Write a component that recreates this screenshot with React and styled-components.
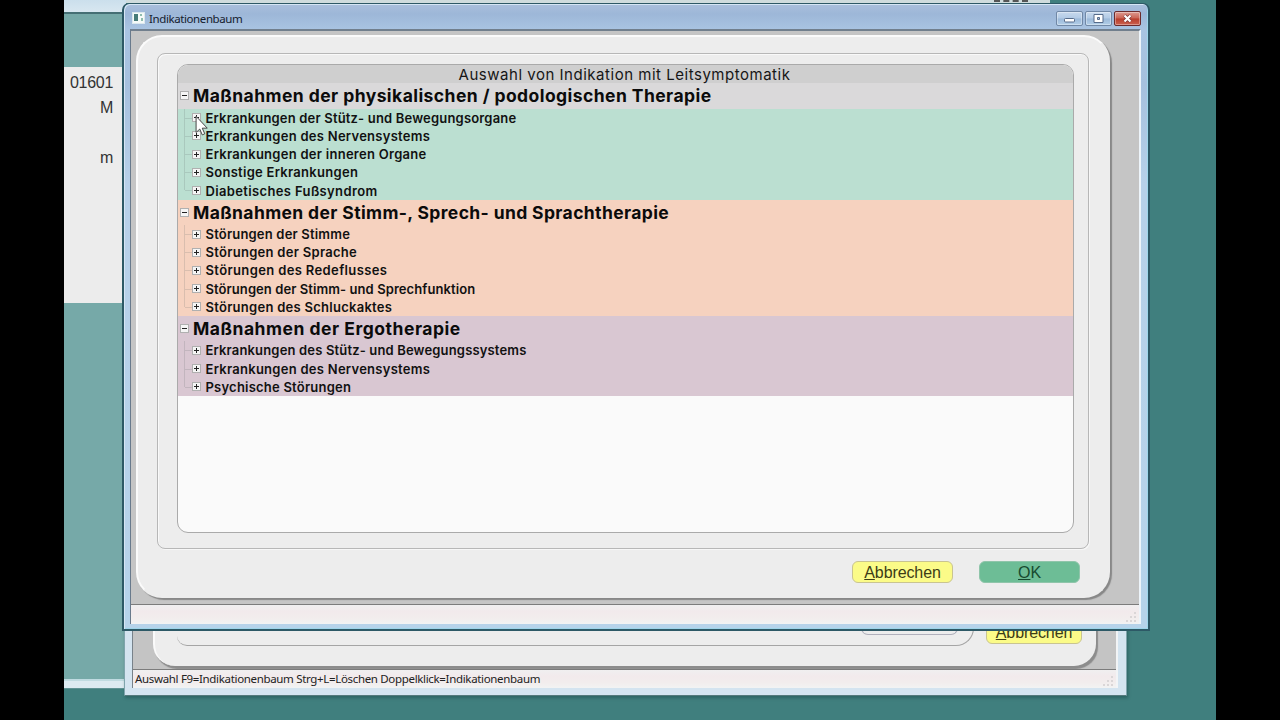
import React from 'react';
import styled, { createGlobalStyle } from 'styled-components';

const GlobalStyle = createGlobalStyle`
  body {
    margin: 0;
    background: #000;
    overflow: hidden;
  }
  * {
    box-sizing: border-box;
  }
`;

const Desktop = styled.div`
  position: relative;
  width: 1152px;
  height: 720px;
  margin: 0 auto;
  overflow: hidden;
  background: #407f7e;
`;

/* main application, mostly hidden behind the dialogs */
const AppWindow = styled.div`
  position: absolute;
  left: 0;
  top: 0;
  width: 62px;
  height: 689px;
  display: flex;
  flex-direction: column;
  background: #76a9a8;
  border-bottom: 1px solid #5f9294;
`;

const AppTitle = styled.div`
  height: 14px;
  background: linear-gradient(#cbdfec, #d8e7f0);
  border-bottom: 2px solid #456f74;
`;

const AppForm = styled.div`
  height: 236px;
  margin-top: 53px;
  padding: 3px 13px 0 0;
  background: #ececec;
  font: 16px/25px 'Liberation Sans', sans-serif;
  letter-spacing: -0.3px;
  color: #333;
  text-align: right;
`;

const Field = styled.div`
  height: 25px;
`;

const AppFooter = styled.div`
  height: 9px;
  margin-top: auto;
  background: #dceaf1;
  border-top: 2px solid #c0dbe1;
`;

const TopWindow = styled.div`
  position: absolute;
  left: 62px;
  top: 0;
  width: 924px;
  height: 3px;
  padding-left: 868px;
  background: #cfdcdd;
`;

const TopMark = styled.div`
  width: 34px;
  height: 2px;
  border-bottom: 2px dashed #555;
`;

const BackWindow = styled.div`
  position: absolute;
  left: 60px;
  top: 560px;
  width: 1003px;
  height: 136px;
  padding: 0 8px 8px 7px;
  background: #d4e4f0;
  border: 1px solid #7fa4ac;
  border-bottom-color: #55797c;
  box-shadow: 1px 2px 3px rgba(10, 50, 50, 0.35);
`;

const BackClient = styled.div`
  display: flex;
  flex-direction: column;
  height: 127px;
  background: #c4c4c4;
  border-left: 1px solid #78828a;
  border-right: 2px solid #f2f4f6;
`;

const BackPanel = styled.div`
  display: flex;
  height: 105px;
  margin: 0 20px 3px 20px;
  padding: 60px 13px 0 22px;
  background: #ededed;
  border-left: 2px solid #fafafa;
  border-radius: 0 0 22px 22px;
  box-shadow: 2px 3px 1px #8c8c8c;
`;

const BackGroup = styled.div`
  width: 797px;
  height: 25px;
  flex: none;
  padding-left: 684px;
  border: 1px solid #a5a5a5;
  border-top: 0;
  border-left: 0;
  border-radius: 0 0 18px 10px;
`;

const BackField = styled.div`
  width: 97px;
  height: 14px;
  border: 1px solid #b0b0bc;
  border-top: 0;
  border-radius: 0 0 7px 7px;
`;

const StatusBar = styled.div`
  display: flex;
  flex: 1;
  align-items: flex-end;
  justify-content: space-between;
  padding: 0 2px 2px 2px;
  background: linear-gradient(#f0eff0, #f2eaec 35%, #f2eded 70%, #f2f3f3);
  border-top: 1px solid #7c7c7c;
  font: 11.5px/15px 'Noto Sans', sans-serif;
  color: #222;
`;

const StatusText = styled.span`
  letter-spacing: -0.33px;
  white-space: nowrap;
`;

const Dialog = styled.div`
  position: absolute;
  left: 58px;
  top: 3px;
  width: 1028px;
  height: 628px;
  display: flex;
  flex-direction: column;
  padding: 0 7px 5px 6px;
  background: linear-gradient(#a9bfdc, #9db7d8 10px, #a9c4e2 26px, #a6c0de 80px, #b7d0e9 180px, #b6d3ea);
  border: 2px solid #2d5966;
  border-top-width: 1px;
  border-radius: 7px 7px 0 0;
  box-shadow: inset 1px 1px 0 #d5e6f5, inset -1px -1px 0 #9ed5ea;
`;

const TitleBar = styled.div`
  display: flex;
  height: 25px;
  align-items: center;
  padding: 3px 0 0 2px;
`;

const Title = styled.div`
  flex: 1;
  padding-left: 4px;
  font: 11.5px/15px 'Noto Sans', sans-serif;
  letter-spacing: -0.4px;
  color: #15202e;
`;

const WindowButtons = styled.div`
  display: flex;
  gap: 2px;
`;

const WindowButton = styled.div`
  display: flex;
  align-items: center;
  justify-content: center;
  width: 27px;
  height: 15px;
  background: ${p => p.$close
    ? 'linear-gradient(#dc9a90, #cb6353 48%, #b83d2b 52%, #cb6250)'
    : 'linear-gradient(#c7d9ed, #b2cae5 48%, #9bb9d9 52%, #b2cee7)'};
  border: 1px solid ${p => (p.$close ? '#6c2b2c' : '#7088a6')};
  border-radius: 2px;
  box-shadow: inset 0 0 0 1px rgba(255, 255, 255, 0.35);
`;

const Client = styled.div`
  display: flex;
  flex: 1;
  flex-direction: column;
  background: #c5c5c5;
  border-top: 2px solid #717f8d;
  border-left: 1px solid #697a8c;
  border-right: 2px solid #edf4fa;
`;

const Panel = styled.div`
  width: 974px;
  height: 563px;
  flex: none;
  margin: 4px 0 6px 5px;
  padding: 16px 19px 0;
  background: #ededed;
  border: 2px solid;
  border-color: #fbfbfb #ededed #ededed #fbfbfb;
  border-radius: 26px;
  box-shadow: 2px 2px 1px #888;
`;

const GroupBox = styled.div`
  height: 496px;
  width: 932px;
  padding: 10px 14px 0 19px;
  border: 1px solid #b7b7b7;
  border-radius: 8px;
  box-shadow: inset 1px 1px 0 #f9f9f9, 1px 1px 0 #f7f7f7;
`;

const List = styled.div`
  height: 469px;
  width: 897px;
  overflow: hidden;
  background: #fafafa;
  border: 1px solid #aaa;
  border-radius: 11px;
`;

const ListHeader = styled.div`
  height: 18.3px;
  background: #cfcfcf;
  font: 400 15px/20px Inter, sans-serif;
  letter-spacing: 0.52px;
  color: #161616;
  text-align: center;
  padding-right: 2px;
`;

const Group = styled.div`
  background: ${p => p.$color};
`;

const GroupTitle = styled.div`
  display: flex;
  align-items: center;
  height: 25.4px;
  padding-left: 2px;
  background: ${p => p.$color};
  font: 700 17.5px/25px Inter, sans-serif;
  letter-spacing: ${p => p.$spacing}px;
  color: #0b0b0b;
  white-space: nowrap;
`;

const Children = styled.div`
  margin-left: 6px;
`;

const Item = styled.div`
  display: flex;
  align-items: center;
  height: 18.2px;
  font: 600 13px/18px Inter, sans-serif;
  letter-spacing: ${p => p.$spacing}px;
  color: #111;
  white-space: nowrap;
`;

const Branch = styled.div`
  width: 8px;
  height: 18.2px;
  background:
    linear-gradient(rgba(90, 100, 100, 0.18), rgba(90, 100, 100, 0.18)) 0 0 / 1px ${p => (p.$last ? '9px' : '100%')} no-repeat,
    linear-gradient(rgba(90, 100, 100, 0.18), rgba(90, 100, 100, 0.18)) 1px 9px / 7px 1px no-repeat;
`;

const ToggleIcon = styled.svg`
  display: block;
  flex: none;
  width: 9px;
  height: 9px;
  margin-right: ${p => p.$gap}px;
`;

const Buttons = styled.div`
  display: flex;
  justify-content: flex-end;
  gap: 26px;
  padding: 12px 9px 0 0;
`;

const Button = styled.div`
  flex: none;
  width: 101px;
  height: 22px;
  background: ${p => (p.$primary ? '#6dbd96' : '#fbfb88')};
  border: 1px solid ${p => (p.$primary ? '#8fc5aa' : '#c9c491')};
  border-radius: 6px;
  font: 16px/21px 'Liberation Sans', sans-serif;
  letter-spacing: -0.1px;
  color: ${p => (p.$primary ? '#174a30' : '#3c3c16')};
  text-align: center;
`;

const BackButton = styled(Button)`
  width: 96px;
  height: 23px;
  margin: 0 0 0 12px;
`;

const Pointer = styled.svg`
  position: absolute;
  left: 131px;
  top: 115px;
`;

const groups = [
  {
    title: 'Maßnahmen der physikalischen / podologischen Therapie',
    spacing: 0.435,
    color: '#bbdfd1',
    titleColor: '#dad9da',
    items: [
      { label: 'Erkrankungen der Stütz- und Bewegungsorgane', spacing: 0.18 },
      { label: 'Erkrankungen des Nervensystems', spacing: 0.27 },
      { label: 'Erkrankungen der inneren Organe', spacing: 0.27 },
      { label: 'Sonstige Erkrankungen', spacing: 0.28 },
      { label: 'Diabetisches Fußsyndrom', spacing: 0.36 },
    ],
  },
  {
    title: 'Maßnahmen der Stimm-, Sprech- und Sprachtherapie',
    spacing: 0.375,
    color: '#f6d2bf',
    items: [
      { label: 'Störungen der Stimme', spacing: 0.19 },
      { label: 'Störungen der Sprache', spacing: 0.29 },
      { label: 'Störungen des Redeflusses', spacing: 0.37 },
      { label: 'Störungen der Stimm- und Sprechfunktion', spacing: 0.08 },
      { label: 'Störungen des Schluckaktes', spacing: 0.27 },
    ],
  },
  {
    title: 'Maßnahmen der Ergotherapie',
    spacing: 0.52,
    color: '#d9c7d2',
    items: [
      { label: 'Erkrankungen des Stütz- und Bewegungssystems', spacing: 0.16 },
      { label: 'Erkrankungen des Nervensystems', spacing: 0.27 },
      { label: 'Psychische Störungen', spacing: 0.22 },
    ],
  },
];

const Toggle = ({ open, gap }) => (
  <ToggleIcon viewBox="0 0 9 9" $gap={gap}>
    <rect x="0.5" y="0.5" width="8" height="8" fill="#f5f5f5" stroke="#b0b0b0" />
    <path d={open ? 'M2 4.5h5' : 'M2 4.5h5M4.5 2v5'} stroke="#222" />
  </ToggleIcon>
);

const Grip = () => (
  <svg width="11" height="11" viewBox="0 0 11 11">
    <path
      d="M8 1h2v2H8zM8 5h2v2H8zM8 9h2v2H8zM4 5h2v2H4zM4 9h2v2H4zM0 9h2v2H0z"
      fill="#dad6d7"
    />
  </svg>
);

export default function App() {
  return (
    <>
      <GlobalStyle />
      <Desktop>
        <AppWindow>
          <AppTitle />
          <AppForm>
            <Field>01601</Field>
            <Field>M</Field>
            <Field />
            <Field>m</Field>
          </AppForm>
          <AppFooter />
        </AppWindow>
        <TopWindow>
          <TopMark />
        </TopWindow>

        <BackWindow>
          <BackClient>
            <BackPanel>
              <BackGroup>
                <BackField />
              </BackGroup>
              <BackButton><u>A</u>bbrechen</BackButton>
            </BackPanel>
            <StatusBar>
              <StatusText>Auswahl F9=Indikationenbaum Strg+L=Löschen Doppelklick=Indikationenbaum</StatusText>
              <Grip />
            </StatusBar>
          </BackClient>
        </BackWindow>

        <Dialog>
          <TitleBar>
            <svg width="13" height="12" viewBox="0 0 13 12">
              <rect x="0.5" y="0.5" width="12" height="11" fill="#f5faf8" stroke="#dce8ee" />
              <rect x="2" y="2" width="4" height="7" fill="#467b78" />
              <path d="M8 2h2v2H8zM9 6h2v3H9z" fill="#8ebcae" />
            </svg>
            <Title>Indikationenbaum</Title>
            <WindowButtons>
              <WindowButton>
                <svg width="13" height="9" viewBox="0 0 13 9">
                  <rect x="1.5" y="4.5" width="10" height="3.5" rx="1" fill="#fff" stroke="#566b8a" />
                </svg>
              </WindowButton>
              <WindowButton>
                <svg width="11" height="9" viewBox="0 0 11 9">
                  <path d="M1 0.5h9v8H1zM4.5 3.5h2v2h-2z" fill="#fff" fillRule="evenodd" stroke="#566b8a" />
                </svg>
              </WindowButton>
              <WindowButton $close>
                <svg width="11" height="9" viewBox="0 0 11 9">
                  <path d="M2.5 1.5l6 6M8.5 1.5l-6 6" stroke="#7a3434" strokeWidth="3.6" />
                  <path d="M2.5 1.5l6 6M8.5 1.5l-6 6" stroke="#fff" strokeWidth="2.2" />
                </svg>
              </WindowButton>
            </WindowButtons>
          </TitleBar>
          <Client>
            <Panel>
              <GroupBox>
                <List>
                  <ListHeader>Auswahl von Indikation mit Leitsymptomatik</ListHeader>
                  {groups.map(group => (
                    <Group key={group.title} $color={group.color}>
                      <GroupTitle $color={group.titleColor} $spacing={group.spacing}>
                        <Toggle open gap={4} />
                        {group.title}
                      </GroupTitle>
                      <Children>
                        {group.items.map((item, i) => (
                          <Item key={item.label} $spacing={item.spacing}>
                            <Branch $last={i === group.items.length - 1} />
                            <Toggle gap={4.5} />
                            {item.label}
                          </Item>
                        ))}
                      </Children>
                    </Group>
                  ))}
                </List>
              </GroupBox>
              <Buttons>
                <Button><u>A</u>bbrechen</Button>
                <Button $primary><u>O</u>K</Button>
              </Buttons>
            </Panel>
            <StatusBar>
              <StatusText />
              <Grip />
            </StatusBar>
          </Client>
        </Dialog>

        <Pointer width="13" height="22" viewBox="0 0 12 20">
          <path
            d="M1 1v15l3.4-3.2 2.3 5.4 2.3-1-2.3-5.2h4.6z"
            fill="#fff"
            stroke="#444"
            strokeWidth="0.9"
          />
        </Pointer>
      </Desktop>
    </>
  );
}
